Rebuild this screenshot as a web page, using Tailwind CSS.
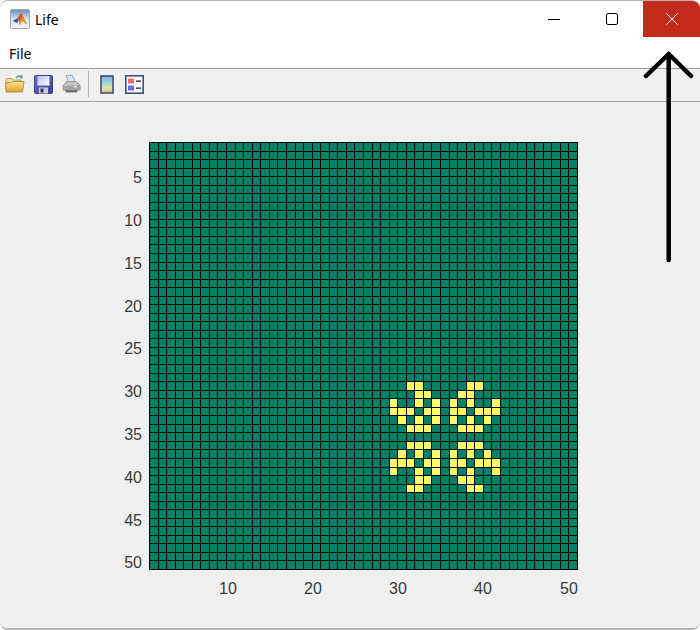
<!doctype html>
<html>
<head>
<meta charset="utf-8">
<script src="https://cdn.jsdelivr.net/npm/@tailwindcss/browser@4"></script>
</head>
<body class="bg-white overflow-hidden">
<div class="relative w-[700px] h-[630px] flex flex-col bg-white rounded-lg overflow-hidden border-t border-b-2 border-[#b4b4b4] font-['Noto_Sans','Open_Sans',sans-serif] text-[14px] text-black">
  <!-- title bar -->
  <div class="h-[36px] flex items-center shrink-0">
    <svg class="ml-[10px] w-[20px] h-[20px] shrink-0" viewBox="0 0 20 20">
      <defs>
        <linearGradient id="tb" x1="0" y1="0" x2="0" y2="1"><stop offset="0" stop-color="#5f8fc0"/><stop offset="0.5" stop-color="#d8e4f0"/><stop offset="1" stop-color="#f4f4f4"/></linearGradient>
      </defs>
      <rect x="0.5" y="0.5" width="19" height="19" rx="1.5" fill="url(#tb)" stroke="#a8a8a8"/>
      <path d="M2.5 12 L7 9.5 L9 11 L7 14 Z" fill="#2f5f9f"/>
      <path d="M7 9.5 L11.5 3 L13 8 L9 13 L9 11 Z" fill="#e0501c"/>
      <path d="M11.5 3 C13.5 7 15 12 17.5 15 C15 14.5 13.5 13 12.5 12 C11.5 13 10.5 14.5 9.5 16.5 L9 13 L13 8 Z" fill="#e8882a"/>
    </svg>
    <span class="ml-[5px] pt-[1px] leading-none">Life</span>
    <div class="ml-auto flex items-center h-full">
      <div class="w-[58px] h-full flex items-center justify-center">
        <div class="w-[12px] h-px bg-black"></div>
      </div>
      <div class="w-[58px] mr-[2px] h-full flex items-center justify-center">
        <div class="w-[12px] h-[12px] border border-black rounded-[2px]"></div>
      </div>
      <div class="w-[57px] h-full bg-[#c42b1c] flex items-center justify-center">
        <svg class="w-[12px] h-[12px]" viewBox="0 0 12 12"><path d="M0.5 0.5 L11.5 11.5 M11.5 0.5 L0.5 11.5" stroke="#fff" stroke-width="1"/></svg>
      </div>
    </div>
  </div>
  <!-- menu bar -->
  <div class="h-[32px] flex items-center pl-[9px] pt-[3px] shrink-0 border-b border-[#a0a0a0]">
    <span class="leading-none">File</span>
  </div>
  <!-- toolbar -->
  <div class="h-[33px] bg-[#f0f0f0] border-b border-[#a0a0a0] flex items-center pb-[2px] shrink-0">
    <!-- open -->
    <svg class="ml-[5px] w-[20px] h-[20px]" viewBox="0 0 20 20">
      <defs>
        <linearGradient id="fo" x1="0" y1="0" x2="0" y2="1"><stop offset="0" stop-color="#fde48a"/><stop offset="1" stop-color="#dca52c"/></linearGradient>
        <linearGradient id="sv" x1="0" y1="0" x2="1" y2="1"><stop offset="0" stop-color="#6a70cc"/><stop offset="1" stop-color="#3a3f9a"/></linearGradient>
        <linearGradient id="sl" x1="0" y1="0" x2="1" y2="1"><stop offset="0" stop-color="#b8c0e8"/><stop offset="1" stop-color="#ffffff"/></linearGradient>
      </defs>
      <path d="M11 4 C13 1.5 15.5 1.5 17 3" fill="none" stroke="#6d8ca8" stroke-width="1.5"/>
      <path d="M17.5 1 L17.5 4.5 L14.5 4 Z" fill="#6d8ca8"/>
      <path d="M1 6 L1.5 4.5 L7 4.5 L8 6 L16 6 L16 9 L1 9 Z" fill="#f4e0a0" stroke="#a88a40" stroke-width="0.8"/>
      <path d="M1 18 L0.6 9 L6 8.5 L7 7.5 L19 7.5 L17.5 18 Z" fill="url(#fo)" stroke="#a88a40" stroke-width="0.9" stroke-linejoin="round"/>
    </svg>
    <!-- save -->
    <svg class="ml-[9px] w-[19px] h-[19px]" viewBox="0 0 19 19">
      <rect x="0.5" y="0.5" width="18" height="18" rx="1" fill="url(#sv)" stroke="#3a4090"/>
      <rect x="3.5" y="1" width="12" height="9.5" fill="url(#sl)"/>
      <rect x="5" y="12.5" width="9" height="6" fill="#c8cce0"/>
      <rect x="6.5" y="13.5" width="3" height="4" fill="#333a60"/>
    </svg>
    <!-- print -->
    <svg class="ml-[9px] w-[19px] h-[20px]" viewBox="0 0 19 20">
      <path d="M4 1.5 L10 1 L13.5 8 L6.5 9 Z" fill="#d4e4f4" stroke="#8a96a4" stroke-width="0.8"/>
      <path d="M1 12 L4 8 L14 7.5 L18 11 L18 16 L1 16 Z" fill="#c8c8c8" stroke="#7e7e7e" stroke-width="0.8"/>
      <path d="M1 12 L18 11 L18 16 L1 16 Z" fill="#a4a4a4"/>
      <path d="M3 16 L16 16 L15 18.5 L4 18.5 Z" fill="#707070"/>
      <rect x="12" y="12" width="3" height="1.5" fill="#e8e8e8"/>
    </svg>
    <div class="ml-[7px] w-px h-[26px] bg-[#b4b4b4]"></div>
    <!-- colorbar -->
    <svg class="ml-[11px] w-[14px] h-[19px]" viewBox="0 0 14 19">
      <defs>
        <linearGradient id="cb" x1="0" y1="0" x2="0" y2="1"><stop offset="0" stop-color="#8f9fe8"/><stop offset="0.35" stop-color="#90d8d8"/><stop offset="0.7" stop-color="#d8e8a0"/><stop offset="1" stop-color="#f4b080"/></linearGradient>
      </defs>
      <rect x="1" y="1" width="12" height="17" fill="url(#cb)" stroke="#3f4f78" stroke-width="1.6"/>
    </svg>
    <!-- legend -->
    <svg class="ml-[11px] w-[19px] h-[19px]" viewBox="0 0 19 19">
      <rect x="0.8" y="0.8" width="17.4" height="17.4" fill="#fff" stroke="#3f4f78" stroke-width="1.6"/>
      <rect x="3" y="3.5" width="6" height="5" fill="#ee6a6a"/>
      <rect x="3" y="10.5" width="6" height="5" fill="#6a6af0"/>
      <rect x="11" y="5.5" width="5" height="1.3" fill="#222"/>
      <rect x="11" y="12.5" width="5" height="1.3" fill="#222"/>
    </svg>
  </div>
  <!-- figure -->
  <div class="flex-1 bg-[#f0f0f0] pt-[40px] pl-[149px] font-['Liberation_Sans',Arial,sans-serif] text-[16px] leading-[18px] text-[#3a3a3a]">
    <div class="relative w-[429px] h-[428px]">
      <div id="grid" class="w-full h-full grid grid-cols-[repeat(50,1fr)] grid-rows-[repeat(50,1fr)] border-l border-t border-black"></div>
      <span class="absolute right-[436px] top-[27px]">5</span>
      <span class="absolute right-[436px] top-[70px]">10</span>
      <span class="absolute right-[436px] top-[113px]">15</span>
      <span class="absolute right-[436px] top-[156px]">20</span>
      <span class="absolute right-[436px] top-[198px]">25</span>
      <span class="absolute right-[436px] top-[241px]">30</span>
      <span class="absolute right-[436px] top-[284px]">35</span>
      <span class="absolute right-[436px] top-[327px]">40</span>
      <span class="absolute right-[436px] top-[370px]">45</span>
      <span class="absolute right-[436px] top-[412px]">50</span>
      <span class="absolute left-[59px] w-[40px] text-center top-[438px]">10</span>
      <span class="absolute left-[144px] w-[40px] text-center top-[438px]">20</span>
      <span class="absolute left-[229px] w-[40px] text-center top-[438px]">30</span>
      <span class="absolute left-[314px] w-[40px] text-center top-[438px]">40</span>
      <span class="absolute left-[400px] w-[40px] text-center top-[438px]">50</span>
    </div>
  </div>
  <!-- annotation arrow -->
  <svg class="absolute left-0 top-[-1px] w-[700px] h-[630px] pointer-events-none" viewBox="0 0 700 630">
    <path d="M668.7 260 L668.7 54 M646 76 L668.7 54 L691 76" fill="none" stroke="#000" stroke-width="4.5" stroke-linecap="round" stroke-linejoin="round"/>
  </svg>
</div>
<script>
  var live = {
    28:[30,31,37,38],
    29:[31,32,36,37],
    30:[28,31,33,35,37,40],
    31:[28,29,30,32,33,35,36,38,39,40],
    32:[29,31,33,35,37,39],
    33:[30,31,32,36,37,38],
    35:[30,31,32,36,37,38],
    36:[29,31,33,35,37,39],
    37:[28,29,30,32,33,35,36,38,39,40],
    38:[28,31,33,35,37,40],
    39:[31,32,36,37],
    40:[30,31,37,38]
  };
  var g = document.getElementById('grid');
  for (var r = 0; r < 50; r++) {
    for (var c = 0; c < 50; c++) {
      var d = document.createElement('div');
      var on = live[r] && live[r].indexOf(c) >= 0;
      d.className = on ? 'bg-[#ffff66] border-r border-b border-black min-w-0 min-h-0' : 'bg-[#008066] border-r border-b border-black min-w-0 min-h-0';
      g.appendChild(d);
    }
  }
</script>
</body>
</html>
